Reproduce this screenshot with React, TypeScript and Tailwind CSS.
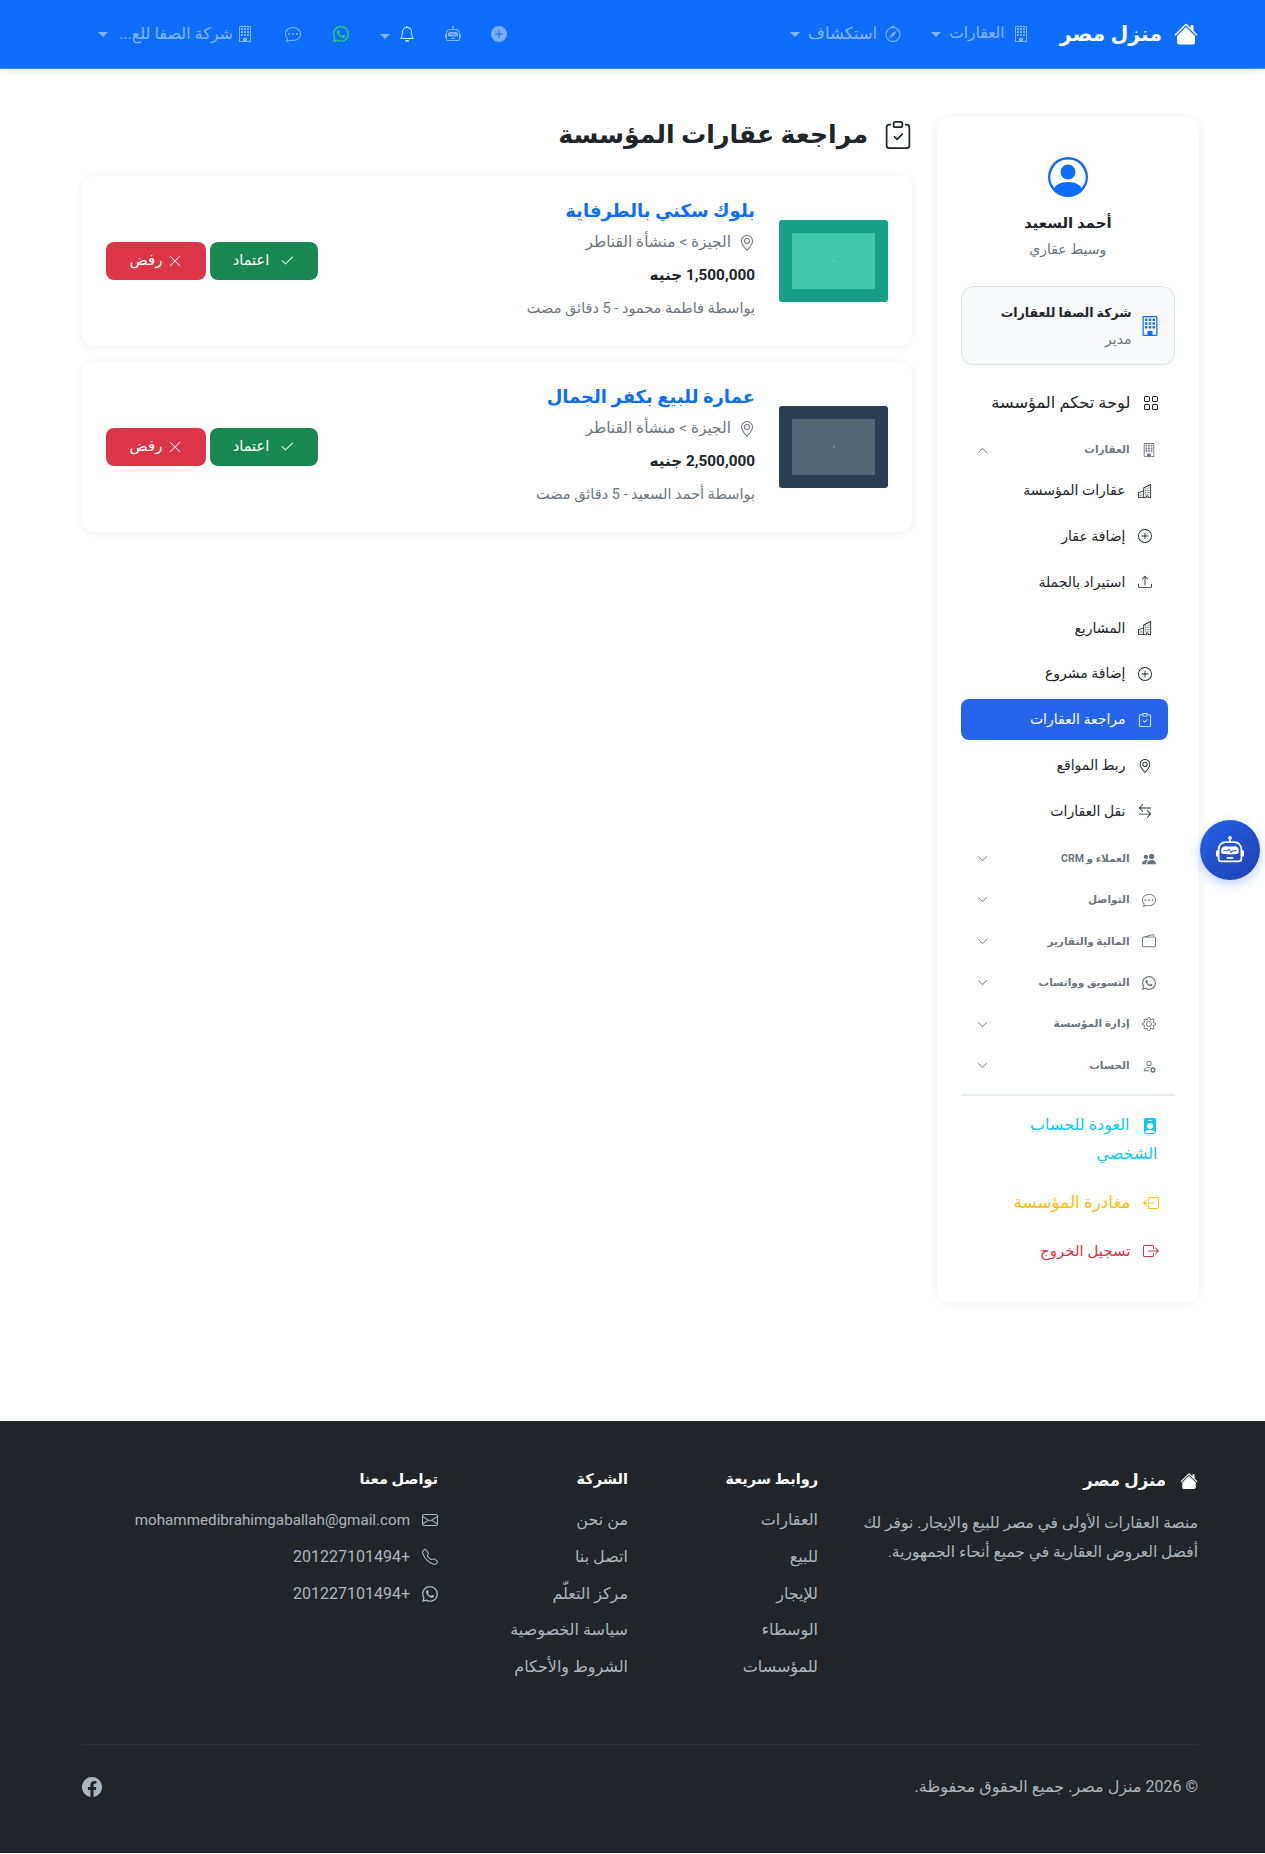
import React from "react";
import type { IconType } from "react-icons";
import {
  BsArrowLeftRight,
  BsBell,
  BsBoxArrowLeft,
  BsBoxArrowRight,
  BsBuilding,
  BsBuildings,
  BsChatDots,
  BsCheck2,
  BsChevronDown,
  BsChevronUp,
  BsClipboardCheck,
  BsCompass,
  BsEnvelope,
  BsFacebook,
  BsGear,
  BsGeoAlt,
  BsGrid,
  BsHouseFill,
  BsPeopleFill,
  BsPersonBadgeFill,
  BsPersonCircle,
  BsPersonGear,
  BsPlusCircle,
  BsPlusCircleFill,
  BsRobot,
  BsTelephone,
  BsUpload,
  BsWallet2,
  BsWhatsapp,
  BsXLg,
} from "react-icons/bs";

const Caret = () => (
  <span className="inline-block h-0 w-0 border-x-[5px] border-t-[5px] border-x-transparent border-t-current" />
);

const subItems: { icon: IconType; label: string; active?: boolean }[] = [
  { icon: BsBuildings, label: "عقارات المؤسسة" },
  { icon: BsPlusCircle, label: "إضافة عقار" },
  { icon: BsUpload, label: "استيراد بالجملة" },
  { icon: BsBuildings, label: "المشاريع" },
  { icon: BsPlusCircle, label: "إضافة مشروع" },
  { icon: BsClipboardCheck, label: "مراجعة العقارات", active: true },
  { icon: BsGeoAlt, label: "ربط المواقع" },
  { icon: BsArrowLeftRight, label: "نقل العقارات" },
];

const groups: { icon: IconType; label: string }[] = [
  { icon: BsPeopleFill, label: "العملاء و CRM" },
  { icon: BsChatDots, label: "التواصل" },
  { icon: BsWallet2, label: "المالية والتقارير" },
  { icon: BsWhatsapp, label: "التسويق وواتساب" },
  { icon: BsGear, label: "إدارة المؤسسة" },
  { icon: BsPersonGear, label: "الحساب" },
];

const properties = [
  {
    title: "بلوك سكني بالطرفاية",
    price: "1,500,000 جنيه",
    by: "بواسطة فاطمة محمود - 5 دقائق مضت",
    outer: "bg-[#16a085]",
    inner: "bg-[#3fc8aa]",
  },
  {
    title: "عمارة للبيع بكفر الجمال",
    price: "2,500,000 جنيه",
    by: "بواسطة أحمد السعيد - 5 دقائق مضت",
    outer: "bg-[#2c3e50]",
    inner: "bg-[#566573]",
  },
];

function Header() {
  return (
    <header className="flex h-[69px] items-center justify-between border-b border-[#3d8bfd] bg-[#0d6efd] pl-[98px] pr-[67px] shadow-[0_2px_6px_rgba(0,0,0,0.1)]">
      <div className="flex items-center">
        <div className="flex items-center gap-3 text-white">
          <BsHouseFill className="text-[24px]" />
          <span className="text-[20.5px] font-bold leading-none">منزل مصر</span>
        </div>
        <div className="mr-[31px] flex items-center gap-2 text-[#86b6fe]">
          <BsBuilding className="text-[16px]" />
          <span className="text-[15.5px]">العقارات</span>
          <Caret />
        </div>
        <div className="mr-[30px] flex items-center gap-2 text-[#86b6fe]">
          <BsCompass className="text-[16px]" />
          <span className="text-[16.5px]">استكشاف</span>
          <Caret />
        </div>
      </div>
      <div className="flex items-center text-[#86b6fe]">
        <BsPlusCircleFill className="ml-[30px] text-[16px] opacity-90" />
        <BsRobot className="ml-[30px] text-[16px]" />
        <BsBell className="ml-[9px] text-[16px] text-[#cfe2ff]" />
        <span className="ml-[31px]"><Caret /></span>
        <BsWhatsapp className="ml-[32px] text-[16px] text-[#25d366]" />
        <BsChatDots className="ml-[32px] text-[16px]" />
        <BsBuilding className="ml-1 text-[16px]" />
        <span className="ml-[10px] w-[115px] text-[16px] leading-none">شركة الصفا للع...</span>
        <Caret />
      </div>
    </header>
  );
}

function Sidebar() {
  return (
    <aside className="h-[1184.5px] w-[261.5px] shrink-0 rounded-xl bg-white px-6 pt-[40px] shadow-[0_1px_10px_rgba(0,0,0,0.07)]">
      <div className="flex flex-col items-center">
        <BsPersonCircle className="text-[40px] text-[#0d6efd]" />
        <div className="mt-3 text-[15px] font-bold leading-[28px] text-[#212529]">أحمد السعيد</div>
        <div className="text-[14px] leading-[25px] text-[#6c757d]">وسيط عقاري</div>
      </div>
      <div className="mt-[24px] flex h-[79px] items-center gap-2 rounded-xl border border-[#dee2e6] bg-[#f8f9fa] pr-[14px]">
        <BsBuilding className="text-[20px] text-[#0d6efd]" />
        <div>
          <div className="text-[12.5px] font-bold leading-[28px] text-[#212529]">شركة الصفا للعقارات</div>
          <div className="text-[14px] leading-[25px] text-[#6c757d]">مدير</div>
        </div>
      </div>
      <div className="mt-[15px] flex h-[46px] items-center gap-3 pr-[16px] text-[16.3px] font-medium text-[#212529]">
        <BsGrid className="text-[16px]" />
        <span>لوحة تحكم المؤسسة</span>
      </div>
      <div className="mt-1 flex h-[40px] items-center justify-between pl-[16px] pr-[19px] text-[10.5px] font-bold text-[#6c757d]">
        <span className="flex items-center gap-3">
          <BsBuilding className="text-[14px]" />
          العقارات
        </span>
        <BsChevronUp className="text-[11px]" />
      </div>
      <div className="mr-[7px] flex w-[207px] flex-col gap-[4.85px]">
        {subItems.map((item, index) => (
          <div
            key={index}
            className={
              item.active
                ? "flex h-[41px] items-center gap-3 rounded-lg bg-[#2563eb] pr-[16px] text-[14px] font-medium text-white"
                : "flex h-[41px] items-center gap-3 pr-[16px] text-[14px] font-medium text-[#212529]"
            }
          >
            <item.icon className="text-[14px]" />
            <span>{item.label}</span>
          </div>
        ))}
      </div>
      <div className="mt-[6px] flex flex-col">
        {groups.map((group) => (
          <div
            key={group.label}
            className="flex h-[41.4px] items-center justify-between pl-[16px] pr-[19px] text-[10.5px] font-bold text-[#6c757d]"
          >
            <span className="flex items-center gap-3">
              <group.icon className="text-[14px]" />
              {group.label}
            </span>
            <BsChevronDown className="text-[11px]" />
          </div>
        ))}
      </div>
      <div className="mt-[8px] h-[2px] bg-[#e9ecef]" />
      <div className="mt-[14px] pr-[17px] text-[16px] leading-[29px] text-[#0dcaf0]">
        <BsPersonBadgeFill className="ml-3 inline-block text-[16px]" />
        العودة للحساب
        <br />
        الشخصي
      </div>
      <div className="mt-[20px] flex h-[29px] items-center gap-3 pr-[16px] text-[16.8px] text-[#ffc107]">
        <BsBoxArrowLeft className="text-[16px]" />
        <span>مغادرة المؤسسة</span>
      </div>
      <div className="mt-[19px] flex h-[29px] items-center gap-3 pr-[16px] text-[15px] text-[#dc3545]">
        <BsBoxArrowRight className="text-[16px]" />
        <span>تسجيل الخروج</span>
      </div>
    </aside>
  );
}

function PropertyCard({ property }: { property: (typeof properties)[number] }) {
  return (
    <div className="flex h-[170px] items-center gap-6 rounded-xl bg-white p-6 shadow-[0_1px_10px_rgba(0,0,0,0.07)]">
      <div className={`${property.outer} flex h-[82px] w-[109px] shrink-0 items-center justify-center rounded-[3px]`}>
        <div className={`${property.inner} flex h-[56px] w-[83px] items-center justify-center`}>
          <div className="h-[2px] w-[2px] bg-white/20" />
        </div>
      </div>
      <div className="flex-1">
        <div className="text-[18px] font-semibold leading-[22px] text-[#0d6efd]">{property.title}</div>
        <div className="mt-[6px] flex h-[29px] items-center gap-2 text-[15.4px] text-[#6c757d]">
          <BsGeoAlt className="text-[16px]" />
          <span>الجيزة &gt; منشأة القناطر</span>
        </div>
        <div className="mt-1 text-[15.3px] font-bold leading-[29px] text-[#212529]">{property.price}</div>
        <div className="mt-[6px] text-[14.5px] leading-[25px] text-[#6c757d]">{property.by}</div>
      </div>
      <div className="flex items-center gap-1">
        <button type="button" className="flex h-[38px] w-[108px] items-center justify-center gap-[10px] rounded-lg bg-[#198754] text-[14.5px] font-normal text-white">
          <BsCheck2 className="text-[16px]" />
          اعتماد
        </button>
        <button type="button" className="flex h-[38px] w-[100px] items-center justify-center gap-[6px] rounded-lg bg-[#dc3545] text-[15px] font-normal text-white">
          <BsXLg className="text-[14px]" />
          رفض
        </button>
      </div>
    </div>
  );
}

const FooterLinks = ({ title, links }: { title: string; links: string[] }) => (
  <div>
    <div className="text-[14.5px] font-bold leading-[21px] text-white">{title}</div>
    <div className="mt-[16px] flex flex-col gap-2">
      {links.map((link) => (
        <div key={link} className="leading-[28.8px]">{link}</div>
      ))}
    </div>
  </div>
);

function Footer() {
  return (
    <footer className="h-[432px] bg-[#212529] pl-[82px] pr-[67px] pt-12 text-[16px] text-[#adb5bd]">
      <div className="grid h-[275px] grid-cols-[356px_166px_166px_356px] gap-6">
        <div>
          <div className="flex items-center gap-[14px] text-[16.6px] font-bold leading-[24px] text-white">
            <BsHouseFill className="text-[18px]" />
            <span>منزل مصر</span>
          </div>
          <p className="mt-[16px] text-[15.5px] leading-[28.8px]">
            منصة العقارات الأولى في مصر للبيع والإيجار. نوفر لك أفضل العروض العقارية في جميع أنحاء الجمهورية.
          </p>
        </div>
        <FooterLinks title="روابط سريعة" links={["العقارات", "للبيع", "للإيجار", "الوسطاء", "للمؤسسات"]} />
        <FooterLinks title="الشركة" links={["من نحن", "اتصل بنا", "مركز التعلّم", "سياسة الخصوصية", "الشروط والأحكام"]} />
        <div>
          <div className="text-[14.5px] font-bold leading-[21px] text-white">تواصل معنا</div>
          <div className="mt-[16px] flex flex-col gap-2">
            <div className="flex items-center gap-3 text-[15.2px] leading-[28.8px]">
              <BsEnvelope className="text-[16px]" />
              mohammedibrahimgaballah@gmail.com
            </div>
            <div className="flex items-center gap-3 leading-[28.8px]">
              <BsTelephone className="text-[16px]" />
              +201227101494
            </div>
            <div className="flex items-center gap-3 leading-[28.8px]">
              <BsWhatsapp className="text-[16px]" />
              +201227101494
            </div>
          </div>
        </div>
      </div>
      <div className="h-px bg-[#2e3236]" />
      <div className="mt-[28px] flex items-center justify-between leading-[28.8px]">
        <span>© 2026 منزل مصر. جميع الحقوق محفوظة.</span>
        <BsFacebook className="text-[20px]" />
      </div>
    </footer>
  );
}

export default function App() {
  return (
    <div dir="rtl" className="relative min-h-[1854px] bg-white font-['Roboto','DejaVu_Sans',sans-serif]">
      <Header />
      <main className="flex gap-[25px] pb-[119.5px] pl-[82px] pr-[66.5px] pt-[48px]">
        <Sidebar />
        <div className="flex-1">
          <div className="mb-[22.5px] flex h-[36px] items-center gap-[16px] text-[25.2px] font-bold leading-none text-[#212529]">
            <BsClipboardCheck className="text-[28px]" />
            <span>مراجعة عقارات المؤسسة</span>
          </div>
          <div className="flex flex-col gap-4">
            {properties.map((property) => (
              <PropertyCard key={property.title} property={property} />
            ))}
          </div>
        </div>
      </main>
      <Footer />
      <div className="absolute left-[1200px] top-[820px] flex h-[60px] w-[60px] items-center justify-center rounded-full bg-gradient-to-br from-[#2563eb] to-[#1e40af] text-[28px] text-white shadow-[0_4px_12px_rgba(37,99,235,0.3)]">
        <BsRobot />
      </div>
    </div>
  );
}
